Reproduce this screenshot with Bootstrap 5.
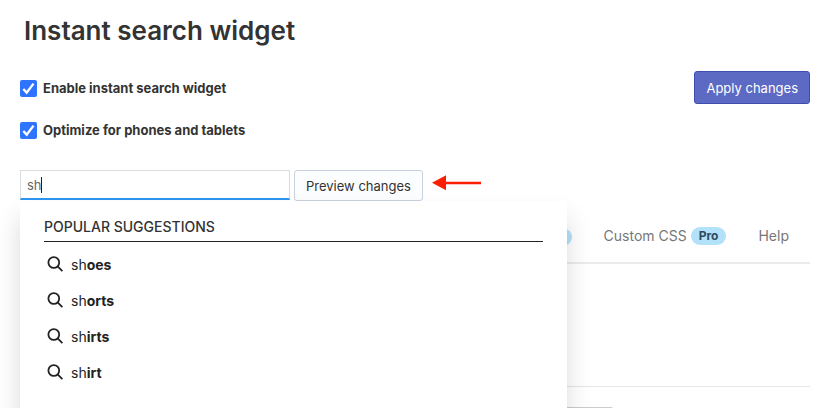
<!DOCTYPE html>
<html lang="en">
<head>
<meta charset="utf-8">
<meta name="viewport" content="width=device-width, initial-scale=1">
<title>Instant search widget</title>
<link href="https://cdn.jsdelivr.net/npm/bootstrap@5.3.0/dist/css/bootstrap.min.css" rel="stylesheet">
<style>
body { font-family: Inter, "Liberation Sans", sans-serif; font-size: 13px; line-height: 20px; color: #333; background: #fff; }
.page { padding: 11px 8px 0 20px; }
.page-title { font-size: 26px; line-height: 40px; font-weight: 600; padding-left: 4px; margin-bottom: 20px; }
.option { gap: 6px; height: 18px; margin-bottom: 24px; font-weight: 700; }
.options { padding-top: 8px; }
.option .form-check-input { width: 17px; height: 17px; margin: 0; border: 0; border-radius: 2px; }
.option .form-check-input:checked { background-color: #2e74ff; background-size: 17px 17px;
  background-image: url("data:image/svg+xml,%3csvg xmlns='http://www.w3.org/2000/svg' viewBox='0 0 17 17'%3e%3cpath fill='none' stroke='%23fff' stroke-width='2.4' d='M3.3 9l3.4 3.6L13.5 3.6'/%3e%3c/svg%3e"); }
.action { font-size: 13px; line-height: 20px; border-radius: 3px; white-space: nowrap; }
.btn-apply { padding: 5px 11px; height: 33px; color: #fff; background: #5c6ac4; border-color: #3f4eae; }
.btn-apply:hover { color: #fff; background: #4959bd; }
.btn-preview { padding: 4px 11px; height: 31px; color: #333; background: #fcfdff; border-color: #c8d2de; }
.search-row { gap: 4px; margin-top: 7px; }
.search-box { width: 270px; }
.search-box .form-control { height: 30px; padding: 1px 6px 0; font-size: 13px; color: #666; border: 1px solid #dadce0; border-bottom: 2px solid #2f95f0; border-radius: 0; box-shadow: none; }
.caret { left: 21px; top: 7px; width: 1px; height: 16px; background: #222; }
.arrow { width: 51px; height: 16px; margin: 5px 0 0 4px; }
.suggest { top: 31px; left: 0; z-index: 5; width: 547px; height: 300px; padding: 16px 24px; background: #fff; box-shadow: 0 16px 24px rgba(0,0,0,.15); }
.suggest-title { font-size: 14px; line-height: 20px; font-weight: 500; padding-bottom: 4px; margin-bottom: 5px; border-bottom: 1px solid #222; }
.suggest-item { gap: 8px; height: 36px; padding-left: 3px; font-size: 14px; color: #222; text-decoration: none; }
.suggest-item svg { margin-bottom: 2px; }
.suggest-item b { font-weight: 700; }
.tabs { gap: 32px; margin-top: 20px; height: 43px; padding: 0 21px 16px 0; border-bottom: 2px solid #ebebeb; }
.tab { gap: 4px; font-size: 14px; line-height: 20px; color: #777; text-decoration: none; }
.pro { padding: 0 8px; border-radius: 9px; font-size: 12px; line-height: 18px; font-weight: 700; color: #2e4a5c; background: #b4e1fa; }
.panel { height: 123px; border-bottom: 1px solid #e6e6e6; }
.field { width: 594px; height: 34px; margin-top: 20px; border: 1px solid #ccc; border-radius: 3px; }
</style>
<script src="https://cdn.jsdelivr.net/npm/bootstrap@5.3.0/dist/js/bootstrap.bundle.min.js"></script>
</head>
<body>
<main class="page vh-100 overflow-hidden">
  <h1 class="page-title">Instant search widget</h1>
  <div class="d-flex justify-content-between align-items-start">
    <div class="options">
      <div class="option d-flex align-items-center">
        <input class="form-check-input" type="checkbox" id="enable" checked>
        <label for="enable">Enable instant search widget</label>
      </div>
      <div class="option d-flex align-items-center">
        <input class="form-check-input" type="checkbox" id="optimize" checked>
        <label for="optimize">Optimize for phones and tablets</label>
      </div>
    </div>
    <button type="button" class="btn action btn-apply">Apply changes</button>
  </div>
  <div class="search-row position-relative d-flex align-items-start">
    <div class="search-box position-relative">
      <input class="form-control" type="text" value="sh" aria-label="Search preview" autocomplete="off">
      <span class="caret position-absolute"></span>
    </div>
    <button type="button" class="btn action btn-preview">Preview changes</button>
    <svg class="arrow" viewBox="0 0 51 16" aria-hidden="true"><path d="M13 8H50" stroke="#fa1e05" stroke-width="2.6"/><path d="M1 7.7L15 .3V15.2z" fill="#fa1e05"/></svg>
    <div class="suggest position-absolute">
      <h2 class="suggest-title">POPULAR SUGGESTIONS</h2>
      <a class="suggest-item d-flex align-items-center" href="#"><svg width="16" height="16" viewBox="0 0 16 16" fill="none" stroke="#222" stroke-width="1.8" aria-hidden="true"><circle cx="6.8" cy="6.5" r="5.4"/><path d="M10.6 10.3L15.4 15.2"/></svg><span>sh<b>oes</b></span></a>
      <a class="suggest-item d-flex align-items-center" href="#"><svg width="16" height="16" viewBox="0 0 16 16" fill="none" stroke="#222" stroke-width="1.8" aria-hidden="true"><circle cx="6.8" cy="6.5" r="5.4"/><path d="M10.6 10.3L15.4 15.2"/></svg><span>sh<b>orts</b></span></a>
      <a class="suggest-item d-flex align-items-center" href="#"><svg width="16" height="16" viewBox="0 0 16 16" fill="none" stroke="#222" stroke-width="1.8" aria-hidden="true"><circle cx="6.8" cy="6.5" r="5.4"/><path d="M10.6 10.3L15.4 15.2"/></svg><span>sh<b>irts</b></span></a>
      <a class="suggest-item d-flex align-items-center" href="#"><svg width="16" height="16" viewBox="0 0 16 16" fill="none" stroke="#222" stroke-width="1.8" aria-hidden="true"><circle cx="6.8" cy="6.5" r="5.4"/><path d="M10.6 10.3L15.4 15.2"/></svg><span>sh<b>irt</b></span></a>
    </div>
  </div>
  <nav class="tabs d-flex justify-content-end align-items-end" aria-label="Settings">
    <a class="tab d-flex align-items-center" href="#"><span class="pro">Pro</span></a>
    <a class="tab d-flex align-items-center" href="#">Custom CSS<span class="pro">Pro</span></a>
    <a class="tab d-flex align-items-center" href="#">Help</a>
  </nav>
  <section class="panel"></section>
  <div class="field"></div>
</main>
</body>
</html>
